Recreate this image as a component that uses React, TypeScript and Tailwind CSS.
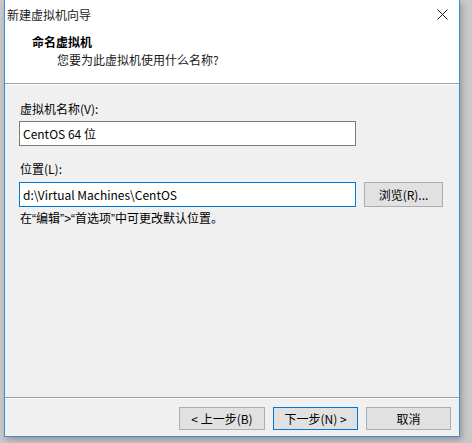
import React from "react";

const font = "font-['Microsoft_YaHei_UI','Noto_Sans_CJK_SC',sans-serif]";
const latin = "font-['Liberation_Sans',sans-serif]";

export default function App() {
  return (
    <div className={`w-[472px] h-[443px] bg-[#c9c9c9] overflow-hidden ${font} text-[12px] text-black`}>
      <div className="ml-[4px] w-[456px] h-[437px] border-x border-b border-[#3a8ddd] bg-[#f0f0f0] flex flex-col shadow-[2px_3px_6px_rgba(0,0,0,0.25)]">
        {/* title bar */}
        <div className="h-[30px] bg-white flex items-center justify-between pl-[2px] pr-[11px]">
          <span className="leading-[16px] -mt-[1px] text-[#1a1a1a]">新建虚拟机向导</span>
          <svg width="11" height="11" viewBox="0 0 11 11" className="-mt-[1px]">
            <path d="M0.5 0.5 L10.5 10.5 M10.5 0.5 L0.5 10.5" stroke="#1a1a1a" strokeWidth="1" />
          </svg>
        </div>
        {/* header */}
        <div className="h-[53px] bg-white pl-[27px] flex flex-col">
          <div className="mt-[4px] leading-[16px] font-bold">命名虚拟机</div>
          <div className="mt-[2px] leading-[16px] pl-[25px] text-[#1a1a1a]">您要为此虚拟机使用什么名称?</div>
        </div>
        <div className="h-[2px] border-t border-[#a0a0a0] border-b border-b-white" />
        {/* body */}
        <div className="flex-1 flex flex-col pl-[14px]">
          <div className="mt-[16px] leading-[16px] pl-[1px]">虚拟机名称(V):</div>
          <div className="mt-[4px] w-[337px] h-[25px] border border-[#7a7a7a] bg-white flex items-center pl-[3px] leading-[16px] whitespace-pre">
            CentOS 64 位
          </div>
          <div className="mt-[15px] leading-[16px] pl-[1px]">位置(L):</div>
          <div className="mt-[5px] flex items-center gap-[8px]">
            <div className="w-[337px] h-[25px] border border-[#0078d7] bg-white flex items-center pl-[3px] leading-[16px]">
              d:\Virtual Machines\CentOS
            </div>
            <div className="w-[79px] h-[25px] border border-[#adadad] bg-[#e1e1e1] flex items-center justify-center leading-[16px]">
              浏览(R)...
            </div>
          </div>
          <div className="mt-[3px] leading-[16px] pl-[1px]">
            在<span className={latin}>“</span>编辑<span className={latin}>”&gt;“</span>首选项<span className={latin}>”</span>中可更改默认位置。
          </div>
        </div>
        {/* footer */}
        <div className="h-[2px] border-t border-[#a0a0a0] border-b border-b-white" />
        <div className="h-[37px] flex items-start justify-end pr-[8px] pt-[8px] gap-[8px]">
          <div className="w-[86px] h-[23px] border border-[#adadad] bg-[#e1e1e1] flex items-center justify-center leading-[16px]">
            &lt; 上一步(B)
          </div>
          <div className="w-[85px] h-[23px] border border-[#0078d7] bg-[#e1e1e1] flex items-center justify-center leading-[16px]">
            下一步(N) &gt;
          </div>
          <div className="w-[85px] h-[23px] border border-[#adadad] bg-[#e1e1e1] flex items-center justify-center leading-[16px]">
            取消
          </div>
        </div>
      </div>
    </div>
  );
}
